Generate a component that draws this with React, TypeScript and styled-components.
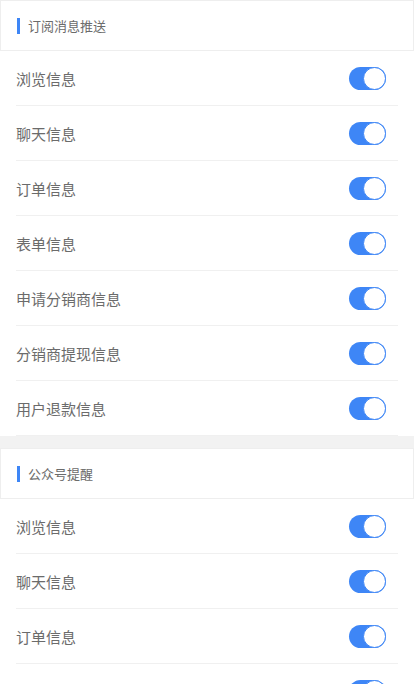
import * as React from 'react';
import styled, { createGlobalStyle } from 'styled-components';

const GlobalStyle = createGlobalStyle`
  body {
    margin: 0;
    background: #fff;
    font-family: "Noto Sans CJK SC", "Noto Sans", sans-serif;
  }
`

const Page = styled.div`
  display: flex;
  flex-direction: column;
  width: 414px;
  background: #fff;
`

const Section = styled.section`
  display: flex;
  flex-direction: column;
`

const Gap = styled.div`
  height: 12px;
  background: #f2f2f2;
`

const Header = styled.div`
  display: flex;
  align-items: center;
  height: 49px;
  padding-left: 16px;
  border: 1px solid #eeeeee;
  gap: 8px;
`

const Bar = styled.span`
  width: 3px;
  height: 16px;
  background: #3e86f6;
`

const HeaderTitle = styled.span`
  font-size: 13px;
  color: #6b6b6b;
  line-height: 1;
`

const Row = styled.div`
  display: flex;
  align-items: center;
  justify-content: space-between;
  height: 54px;
  margin: 0 16px;
  border-bottom: 1px solid #f0f0f0;
`

const Label = styled.span`
  font-size: 15px;
  color: #6b6b6b;
`

const Track = styled.span<{ $on: boolean }>`
  position: relative;
  width: 37px;
  height: 23px;
  margin-right: 12px;
  border-radius: 12px;
  background: ${p => (p.$on ? '#3e86f6' : '#ddd')};
`

const Knob = styled.span<{ $on: boolean }>`
  position: absolute;
  top: 0;
  ${p => (p.$on ? 'right: 0;' : 'left: 0;')}
  width: 21px;
  height: 21px;
  border-radius: 50%;
  background: #fff;
  border: 1px solid #3e86f6;
`

function Toggle({ on }: { on: boolean }) {
  return (
    <Track $on={on}>
      <Knob $on={on} />
    </Track>
  );
}

const subscribe = ['浏览信息', '聊天信息', '订单信息', '表单信息', '申请分销商信息', '分销商提现信息', '用户退款信息'];
const official = ['浏览信息', '聊天信息', '订单信息', '表单信息'];

function Group({ title, items }: { title: string; items: string[] }) {
  return (
    <Section>
      <Header>
        <Bar />
        <HeaderTitle>{title}</HeaderTitle>
      </Header>
      {items.map((name, i) => (
        <Row key={i}>
          <Label>{name}</Label>
          <Toggle on />
        </Row>
      ))}
    </Section>
  );
}

export default function App() {
  return (
    <>
      <GlobalStyle />
      <Page>
        <Group title="订阅消息推送" items={subscribe} />
        <Gap />
        <Group title="公众号提醒" items={official} />
      </Page>
    </>
  );
}
